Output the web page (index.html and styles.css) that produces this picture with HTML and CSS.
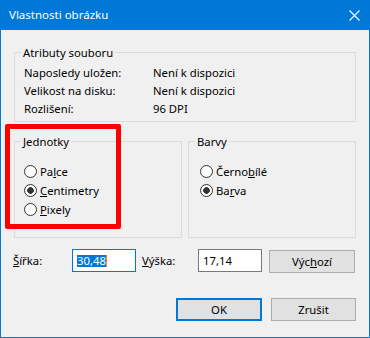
FILE: index.html
```html
<!DOCTYPE html>
<html lang="cs">
<head>
<meta charset="utf-8">
<title>Vlastnosti obrázku</title>
<link rel="stylesheet" href="styles.css">
</head>
<body>
<div class="window">
  <div class="titlebar">
    <span class="title">Vlastnosti obrázku</span>
    <svg class="close" width="11" height="11" viewBox="0 0 11 11"><path d="M0.5 0.5 L10.5 10.5 M10.5 0.5 L0.5 10.5" stroke="#fff" stroke-width="1.1" fill="none"/></svg>
  </div>
  <div class="content">
    <fieldset class="group">
      <legend>Atributy souboru</legend>
      <div class="attr-grid">
        <span>Naposledy uložen:</span><span>Není k dispozici</span>
        <span>Velikost na disku:</span><span>Není k dispozici</span>
        <span>Rozlišení:</span><span>96 DPI</span>
      </div>
    </fieldset>
    <div class="groups-row">
      <fieldset class="group">
        <legend>Jednotky</legend>
        <div class="radios units">
          <div class="radio-row"><span class="radio"></span><span>Pa<u>l</u>ce</span></div>
          <div class="radio-row"><span class="radio checked"></span><span><u>C</u>entimetry</span></div>
          <div class="radio-row"><span class="radio"></span><span><u>P</u>ixely</span></div>
        </div>
      </fieldset>
      <fieldset class="group">
        <legend>Barvy</legend>
        <div class="radios colors">
          <div class="radio-row"><span class="radio"></span><span>Černo<u>b</u>ílé</span></div>
          <div class="radio-row"><span class="radio checked"></span><span>Ba<u>r</u>va</span></div>
        </div>
      </fieldset>
    </div>
    <div class="size-row">
      <span class="size-label"><u>Š</u>ířka:</span>
      <div class="input focused"><span class="sel">30,48</span><span class="caret"></span></div>
      <span class="size-label second"><u>V</u>ýška:</span>
      <div class="input">17,14</div>
      <div class="button reset">Výc<u>h</u>ozí</div>
    </div>
    <div class="buttons">
      <div class="button ok">OK</div>
      <div class="button cancel">Zrušit</div>
    </div>
  </div>
  <div class="annotation"></div>
</div>
</body>
</html>
```

FILE: styles.css
```css
* { box-sizing: border-box; }

html, body {
  margin: 0;
  padding: 0;
  background: #f0f0f0;
}

body {
  font-family: "Noto Sans", "Liberation Sans", sans-serif;
  font-size: 11.3px;
  color: #000;
}

.window {
  position: relative;
  width: 370px;
  height: 338px;
  border: 1px solid #0078d7;
  border-top: 0;
  background: #f0f0f0;
  overflow: hidden;
}

.titlebar {
  height: 30px;
  background: #0078d7;
  display: flex;
  align-items: flex-start;
  justify-content: space-between;
  padding-left: 8px;
}

.title {
  color: #fff;
  font-size: 11.5px;
  line-height: 30px;
}

.close {
  display: block;
  margin-top: 10px;
  margin-right: 9px;
}

.content {
  padding: 15px 13px 0 13px;
}

.group {
  margin: 0;
  padding: 0;
  min-width: 0;
  border: 1px solid #dcdcdc;
}

.group legend {
  margin-left: 6px;
  padding: 0 2px;
  line-height: 15px;
}

.attr-grid {
  display: grid;
  grid-template-columns: 129px auto;
  line-height: 18px;
  padding: 4px 0 3px 9px;
}

.groups-row {
  margin-top: 12px;
  display: grid;
  grid-template-columns: 168px 168px;
  column-gap: 6px;
}

.radios {
  padding: 13px 0 18px 9px;
}

.radios.colors {
  padding-left: 11px;
}

.radio-row {
  display: flex;
  align-items: center;
  height: 19px;
  line-height: 19px;
}

.radio {
  width: 13px;
  height: 13px;
  border: 1px solid #333;
  border-radius: 50%;
  background: #fff;
  margin-right: 3px;
  flex: none;
}

.radio.checked {
  background: radial-gradient(circle, #333 0, #333 3px, #fff 3.6px);
}

.size-row {
  margin-top: 11px;
  display: flex;
  align-items: flex-start;
  height: 24px;
}

.size-label {
  width: 59px;
  line-height: 23px;
  margin-left: -1px;
  padding-left: 0;
}

.size-label.second {
  width: 56px;
  margin-left: 6px;
}

.input {
  width: 64px;
  height: 23px;
  border: 1px solid #7a7a7a;
  background: #fff;
  display: flex;
  align-items: center;
  padding-left: 4px;
  line-height: 15px;
}

.input.focused {
  border-color: #0078d7;
}

.sel {
  display: inline-block;
  height: 12px;
  line-height: 12px;
  background: #0078d7;
  color: #fff;
}

.caret {
  display: inline-block;
  width: 1px;
  height: 12px;
  background: #ff8728;
}

.button {
  height: 23px;
  border: 1px solid #adadad;
  background: #e1e1e1;
  display: flex;
  align-items: center;
  justify-content: center;
  line-height: 15px;
}

.button.reset {
  width: 86px;
  margin-left: 7px;
  margin-top: 1px;
}

.buttons {
  margin-top: 25px;
  display: flex;
  justify-content: flex-end;
}

.button.ok {
  width: 86px;
  border: 2px solid #0078d7;
}

.button.cancel {
  width: 85px;
  margin-left: 9px;
}

.annotation {
  position: absolute;
  left: 4px;
  top: 124px;
  width: 116px;
  height: 105px;
  border: 5px solid #ff0000;
  border-radius: 2px;
  pointer-events: none;
}
```
